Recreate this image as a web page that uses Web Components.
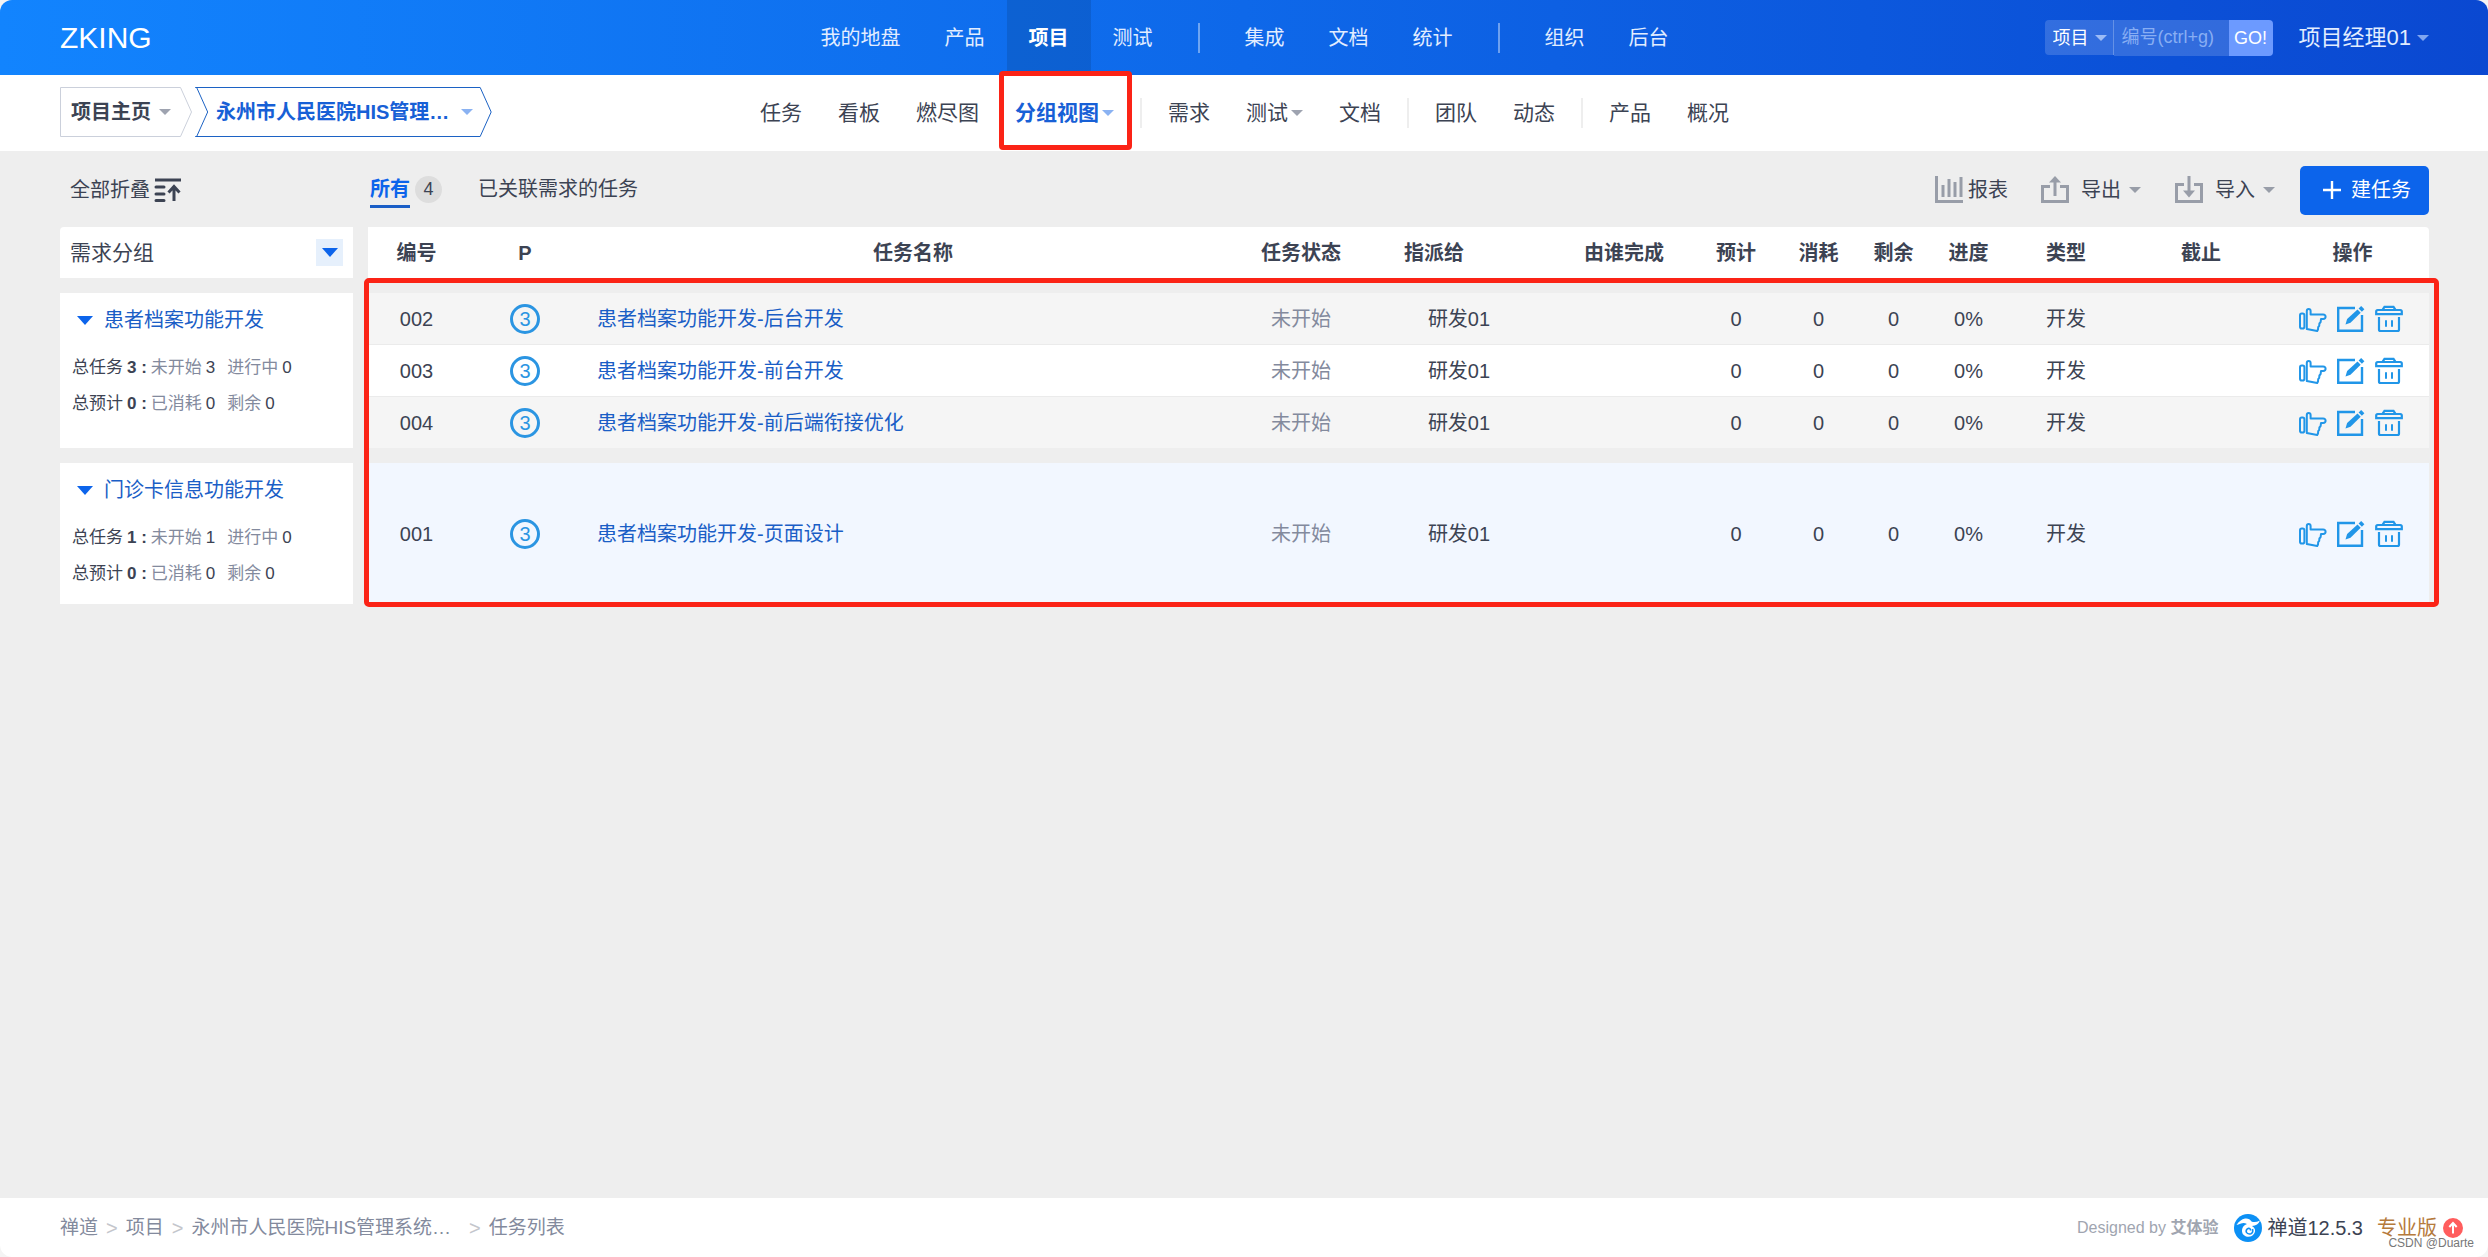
<!DOCTYPE html>
<html lang="zh-CN">
<head>
<meta charset="utf-8">
<meta name="viewport" content="width=device-width, initial-scale=1">
<title>永州市人民医院HIS管理系统::分组视图</title>
<style>
  html { background: #f4f4f4; }
  body {
    margin: 0;
    font-family: "Liberation Sans", "Noto Sans CJK SC", sans-serif;
    font-size: 20px;
    line-height: 28px;
    color: #3c4353;
    --blue: #0c64eb;
    --link: #1a5ec6;
    --muted: #838a9d;
    --mark: #fb2316;
  }
</style>
</head>
<body>
<zt-page>
  <zt-header slot="header"></zt-header>
  <zt-subheader slot="subheader"></zt-subheader>
  <zt-toolbar></zt-toolbar>
  <zt-group-table></zt-group-table>
  <zt-footer slot="footer"></zt-footer>
</zt-page>

<script>
const define = (name, html, setup) => {
  const template = document.createElement('template');
  template.innerHTML = html;
  customElements.define(name, class extends HTMLElement {
    constructor() {
      super();
      this.attachShadow({ mode: 'open' }).append(template.content.cloneNode(true));
    }
    connectedCallback() { if (setup) setup(this, this.shadowRoot); }
  });
};

const BASE = `
  :host, *, *::before, *::after { box-sizing: border-box; }
  a { color: inherit; text-decoration: none; }
  button { font: inherit; color: inherit; background: none; border: 0; padding: 0; cursor: pointer; }
`;

// Each icon: width, height, drawing.
const ICONS = {
  fold: [28, 24, '<path d="M1 2h26" stroke-width="3"/><path d="M2 9h8M2 16h8M2 22.5h8" stroke-width="3" stroke-linecap="round"/><path d="M20 23V9M14.5 14.5 20 8.5l5.5 6" stroke-width="3"/>'],
  chart: [28, 28, '<path d="M1.5 0v25.5H28" stroke-width="3"/><path d="M8 9v12M14 3v18M20 6v15M26 1v20" stroke-width="3"/>'],
  export: [28, 28, '<path d="M9 10.5H1.5v15h25v-15H19" stroke-width="3"/><path d="M14 5v15" stroke-width="3"/><path d="M8 6.5 14 0l6 6.5z" fill="currentColor" stroke="none"/>'],
  import: [28, 28, '<path d="M9 8.5H1.5v17h25v-17H19" stroke-width="3"/><path d="M14 0v16" stroke-width="3"/><path d="M8 14.5l6 7 6-7z" fill="currentColor" stroke="none"/>'],
  plus: [20, 20, '<path d="M10 1v18M1 10h18" stroke-width="2.4"/>'],
  hand: [28, 28, '<rect x="1" y="8.6" width="4.4" height="15" rx="1.8" stroke-width="2"/><path d="M7.8 24V6q0-2 1.9-2t1.9 2v3.6H24q2.6.2 2.6 2.2t-2.6 2.3h-2l-.4 3-1.2 1.4-.2 2.4-1 1.2-.2 2.4-.8 1.5z" stroke-width="2" stroke-linejoin="round"/>'],
  edit: [28, 28, '<path d="M18 3H1.2v22.800H25V10" stroke-width="2.4"/><path d="M8.5 19.500l1.600-5.500L20.500 4.500l3.200 3.200L13.500 17.700z" fill="currentColor" stroke="none"/><path d="M21.600 3.400 24.200 1l3.200 3.200-2.500 2.500z" fill="currentColor" stroke="none"/>'],
  trash: [28, 28, '<path d="M8 5.500V4.200L9.500 1.900h9L20 4.200v1.300" stroke-width="2.2"/><path d="M1.200 9.200V6.500Q1.200 5 2.700 5h22.600q1.500 0 1.500 1.500v2.700z" stroke-width="2.2"/><path d="M4 12v12.500Q4 26 5.500 26h17q1.500 0 1.500-1.500V12" stroke-width="2.2"/><path d="M11 15.200v6.600M17 15.200v6.600" stroke-width="2"/>'],
  up: [20, 20, '<circle cx="10" cy="10" r="10" fill="#ff5d5d" stroke="none"/><path d="M10 15.5V6M6.3 9 10 5l3.7 4" stroke="#fff" stroke-width="2"/>'],
  zentao: [28, 28, '<circle cx="14" cy="14" r="14" fill="#0c90f5" stroke="none"/><path d="M2.500 11Q6 5.500 11 4.500q4.500-.5 6.500 3 3.500 1.500 8.500-1Q24 11.500 18 12q4.500 3 2.500 7-3 5-8.500 3.500-4.500-2-4-6.500.5-4.500 5-6-3-1.500-6-.5T2.500 11z" fill="#fff" stroke="none"/><path d="M18.500 15q1 3.500-1.500 4.800-3.500.8-4.800-1.800-.4-3 2.300-3.800 2.400.2 1.800 2.300" stroke="#0c90f5" stroke-width="1.6"/>']
};

define('zt-icon', `<style>:host{display:inline-flex;flex:none} svg{display:block;fill:none;stroke:currentColor}</style>`,
  (el, root) => {
    const [w, h, body] = ICONS[el.getAttribute('name')];
    const box = document.createElement('template');
    box.innerHTML = `<svg width="${w}" height="${h}" viewBox="0 0 ${w} ${h}" aria-hidden="true">${body}</svg>`;
    root.append(box.content);
  });

define('zt-caret', `<style>
  :host { display: inline-block; flex: none; width: 0; height: 0;
    border: 6px solid transparent; border-top-color: currentColor; border-bottom-width: 0; }
  :host([large]) { border-width: 9px 8px 0; }
</style>`);

define('zt-page', `<style>
  :host { display: flex; flex-direction: column; min-height: 100vh; background: #eee; border-radius: 12px; overflow: hidden; }
  main { flex: 1; padding: 0 59px 24px 60px; }
</style>
<slot name="header"></slot><slot name="subheader"></slot>
<main><slot></slot></main>
<slot name="footer"></slot>`);

define('zt-header', `<style>${BASE}
  :host { display: grid; grid-template-columns: 1fr auto 1fr; align-items: center; height: 75px;
    padding: 0 59px 0 60px; background: linear-gradient(90deg, #1284fe, #0e68e9 50%, #0a48d1); color: #e2edff; }
  .brand { font-size: 30px; line-height: 36px; color: #fff; }
  nav { display: flex; align-items: center; align-self: stretch; }
  nav a { display: flex; align-items: center; height: 100%; padding: 0 22px; }
  nav a[aria-current] { background: rgba(10, 70, 150, .3); color: #fff; font-weight: 700; }
  nav i { width: 2px; height: 30px; margin: 0 23px; background: rgba(255, 255, 255, .4); }
  .tools { display: flex; align-items: center; justify-content: flex-end; }
  form { display: flex; align-items: center; height: 36px; margin: 0 26px 0 0; font-size: 18px; line-height: 24px; }
  .type { display: flex; align-items: center; position: relative; height: 35px; background: rgba(255, 255, 255, .16);
    border-right: 1px solid rgba(255, 255, 255, .25); border-radius: 4px 0 0 4px; }
  .type zt-caret { position: absolute; right: 6px; top: 15px; color: #9dbcf6; pointer-events: none; }
  select { appearance: none; font: inherit; color: #fff; background: none; border: 0; width: 68px; height: 35px; padding: 0 8px; }
  input { font: inherit; color: #fff; width: 115px; height: 36px; padding: 0 8px; border: 0; background: rgba(255, 255, 255, .16); border-radius: 0; }
  input::placeholder { color: #88aef3; opacity: 1; }
  form button { width: 44px; height: 36px; border-radius: 0 4px 4px 0; background: #6c9aff; color: #fff; }
  .user { display: flex; align-items: center; gap: 6px; font-size: 22px; }
  .user zt-caret { color: #80a6f0; }
</style>
<a class="brand" href="#">ZKING</a>
<nav aria-label="主导航">
  <a href="#">我的地盘</a><a href="#">产品</a><a href="#" aria-current="page">项目</a><a href="#">测试</a><i></i>
  <a href="#">集成</a><a href="#">文档</a><a href="#">统计</a><i></i>
  <a href="#">组织</a><a href="#">后台</a>
</nav>
<div class="tools">
  <form onsubmit="return false">
    <span class="type"><select aria-label="搜索类型"><option>项目</option></select><zt-caret></zt-caret></span>
    <input type="text" aria-label="编号" placeholder="编号(ctrl+g)">
    <button type="submit">GO!</button>
  </form>
  <button class="user" type="button">项目经理01<zt-caret></zt-caret></button>
</div>`);

define('zt-subheader', `<style>${BASE}
  :host { display: grid; grid-template-columns: 1fr auto 1fr; align-items: center; height: 76px;
    padding: 0 59px 0 60px; background: #fff; }
  .crumbs { display: flex; gap: 2px; margin-bottom: 2px; }
  .crumb { display: grid; height: 50px; font-weight: 700; }
  .crumb > * { grid-area: 1 / 1; }
  .crumb svg { width: 100%; height: 50px; fill: none; }
  .crumb button { display: flex; align-items: center; font-weight: 700; }
  .home { width: 132px; color: #3c4353; }
  .home svg { stroke: #cbd0db; }
  .home button { gap: 8px; padding-left: 11px; }
  .home zt-caret { color: #9ea3b0; }
  .project { width: 297px; color: #1760d6; }
  .project svg { stroke: #1c62c4; }
  .project button { gap: 12px; padding: 0 19px 0 22px; }
  .project span { flex: 1; text-align: left; white-space: nowrap; overflow: hidden; text-overflow: ellipsis; }
  .project zt-caret { color: #8ab2f2; }
  nav { display: flex; align-items: center; align-self: stretch; font-size: 21px; }
  nav a { position: relative; display: flex; align-items: center; height: 100%; padding: 0 18px; gap: 3px; }
  nav a zt-caret { color: #9ea3b0; }
  nav a[aria-current] { color: #1760d6; font-weight: 700; }
  nav a[aria-current] zt-caret { color: #8ab2f2; }
  nav a[aria-current]::after { content: ""; position: absolute; inset: -4px 0 1px 2px; border: 5px solid var(--mark); border-radius: 4px; }
  nav i { width: 2px; height: 30px; margin: 0 8px; background: #eee; }
</style>
<div class="crumbs">
  <div class="crumb home">
    <svg viewBox="0 0 132 50" aria-hidden="true"><path d="M.5.5H120.5L131.5 25 120.5 49.5H.5z"/></svg>
    <button type="button">项目主页<zt-caret></zt-caret></button>
  </div>
  <div class="crumb project">
    <svg viewBox="0 0 297 50" aria-hidden="true"><path d="M.5.5H285.5L296.5 25 285.5 49.5H.5M2 .5 13 25 2 49.5"/></svg>
    <button type="button"><span>永州市人民医院HIS管理…</span><zt-caret></zt-caret></button>
  </div>
</div>
<nav aria-label="项目导航">
  <a href="#">任务</a><a href="#">看板</a><a href="#">燃尽图</a><a href="#" aria-current="page">分组视图<zt-caret></zt-caret></a><i></i>
  <a href="#">需求</a><a href="#">测试<zt-caret></zt-caret></a><a href="#">文档</a><i></i>
  <a href="#">团队</a><a href="#">动态</a><i></i>
  <a href="#">产品</a><a href="#">概况</a>
</nav>`);

define('zt-toolbar', `<style>${BASE}
  :host { display: flex; align-items: center; height: 76px; padding-top: 2px; }
  .fold { display: flex; align-items: center; gap: 4px; width: 310px; padding-left: 10px; }
  .tabs { display: flex; flex: 1; gap: 36px; margin-bottom: 2px; }
  .tabs a { display: flex; align-items: center; gap: 5px; }
  .tabs a[aria-current] { color: var(--blue); font-weight: 700; }
  .tabs a[aria-current] span { height: 38px; line-height: 32px; padding-top: 3px; border-bottom: 3px solid var(--link); }
  .badge { width: 27px; height: 27px; border-radius: 50%; background: #ddd; color: #3c4353; font-size: 18px; line-height: 27px; text-align: center; font-weight: 400; }
  .actions { display: flex; align-items: center; }
  .actions button { display: flex; align-items: center; }
  .actions zt-icon, .actions zt-caret { color: #989da8; }
  .report { gap: 5px; margin-right: 33px; }
  .menu { gap: 12px; margin-right: 34px; }
  .menu zt-caret { margin-left: -4px; }
  .menu + .menu { margin-right: 25px; }
  .actions .create { gap: 9px; height: 49px; padding: 0 18px 0 22px; border-radius: 5px; background: var(--blue); color: #fff; }
  .actions .create zt-icon { color: #fff; }
</style>
<button class="fold" type="button">全部折叠<zt-icon name="fold"></zt-icon></button>
<div class="tabs">
  <a href="#" aria-current="true"><span>所有</span><b class="badge">4</b></a>
  <a href="#">已关联需求的任务</a>
</div>
<div class="actions">
  <button class="report" type="button"><zt-icon name="chart"></zt-icon>报表</button>
  <button class="menu" type="button"><zt-icon name="export"></zt-icon>导出<zt-caret></zt-caret></button>
  <button class="menu" type="button"><zt-icon name="import"></zt-icon>导入<zt-caret></zt-caret></button>
  <button class="create" type="button"><zt-icon name="plus"></zt-icon>建任务</button>
</div>`);

define('zt-group-card', `<style>${BASE}
  :host { display: block; padding: 13px 12px 0; }
  .title { display: flex; align-items: center; gap: 11px; padding-left: 5px; margin-bottom: 16px; color: var(--link); }
  .title zt-caret { color: var(--blue); }
  p { margin: 0; font-size: 17px; line-height: 36px; color: var(--muted); white-space: nowrap; display: flex; gap: 4px; }
  b, i { font-style: normal; color: #3c4353; }
  .total { color: #3c4353; }
  i { margin-right: 8px; }
</style>
<a class="title" href="#"><zt-caret large></zt-caret><slot></slot></a>
<p><span class="total">总任务</span><b id="n"></b><span>未开始</span><i id="wait"></i><span>进行中</span><i>0</i></p>
<p><span class="total">总预计</span><b>0 :</b><span>已消耗</span><i>0</i><span>剩余</span><i>0</i></p>`,
  (el, root) => {
    root.getElementById('n').textContent = el.getAttribute('count') + ' :';
    root.getElementById('wait').textContent = el.getAttribute('count');
  });

const GROUPS = [
  { name: '患者档案功能开发', tasks: [
    ['002', '患者档案功能开发-后台开发'],
    ['003', '患者档案功能开发-前台开发'],
    ['004', '患者档案功能开发-前后端衔接优化'] ] },
  { name: '门诊卡信息功能开发', tint: true, tasks: [
    ['001', '患者档案功能开发-页面设计'] ] }
];
const HEADS = ['编号', 'P', '任务名称', '任务状态', '指派给', '由谁完成', '预计', '消耗', '剩余', '进度', '类型', '截止', '操作'];
// Column widths; 0 takes the remaining space.
const WIDTHS = [293, 15, 97, 120, 0, 120, 196, 134, 90, 75, 75, 75, 120, 150, 153];

define('zt-group-table', `<style>${BASE}
  :host { display: block; position: relative; }
  table { width: 100%; table-layout: fixed; border-collapse: separate; border-spacing: 0; }
  th, td { padding: 0; text-align: center; }
  thead th { height: 51px; background: #fff; }
  thead th:first-child { border-radius: 4px 0 0 0; font-weight: 400; font-size: 21px; }
  thead th:last-child { border-radius: 0 4px 0 0; }
  thead .space { background: none; }
  thead .owner { padding-right: 50px; }
  .pick { display: flex; align-items: center; justify-content: space-between; padding: 0 10px; }
  .pick button { display: flex; align-items: center; justify-content: center; width: 27px; height: 27px; background: #e6f0fc; color: var(--blue); }
  .gap td { height: 15px; }
  .card { background: #fff; vertical-align: top; text-align: left; }
  .task td:not(.card, .space) { height: 52px; background: #f5f5f5; border-bottom: 1px solid #ebebeb; }
  .task.even td:not(.card, .space) { background: #fff; }
  .task.last td:not(.card, .space) { height: 51px; border-bottom: 0; }
  .task.tint td:not(.card, .space) { height: 141px; background: #f2f7ff; }
  .task .name { text-align: left; padding-left: 12px; color: var(--link); }
  .status { color: var(--muted); }
  .pri { display: inline-block; width: 30px; height: 30px; border: 3px solid #2b95e2; border-radius: 50%; color: #2b95e2; font-size: 20px; line-height: 24px; vertical-align: middle; }
  .ops { display: flex; justify-content: center; gap: 10px; padding-right: 3px; color: #2196e8; }
  .ops button { display: flex; }
  .mark { position: absolute; inset: 51px -10px -3px 304px; border: 5px solid var(--mark); border-radius: 5px; pointer-events: none; }
</style>
<table></table><div class="mark"></div>`,
  (el, root) => {
    const cols = WIDTHS.map(w => `<col${w ? ` style="width:${w}px"` : ''}>`).join('');
    const head = HEADS.map(h => `<th scope="col"${h === '指派给' ? ' class="owner"' : ''}>${h}</th>`).join('');
    const gap = '<tr class="gap"><td colspan="15"></td></tr>';
    const body = GROUPS.map(g => '<tbody>' + gap + g.tasks.map(([id, name], i) => {
      const last = i === g.tasks.length - 1;
      const lead = i ? '' : `<td class="card" rowspan="${g.tasks.length}"><zt-group-card count="${g.tasks.length}">${g.name}</zt-group-card></td><td class="space" rowspan="${g.tasks.length}"></td>`;
      return `<tr class="task${i % 2 ? ' even' : ''}${last ? ' last' : ''}${g.tint ? ' tint' : ''}">${lead}
        <td>${id}</td><td><span class="pri">3</span></td><td class="name"><a href="#">${name}</a></td>
        <td class="status">未开始</td><td>研发01</td><td></td><td>0</td><td>0</td><td>0</td><td>0%</td><td>开发</td><td></td>
        <td><div class="ops"><button type="button" aria-label="指派"><zt-icon name="hand"></zt-icon></button><button type="button" aria-label="编辑"><zt-icon name="edit"></zt-icon></button><button type="button" aria-label="删除"><zt-icon name="trash"></zt-icon></button></div></td></tr>`;
    }).join('') + '</tbody>').join('');
    root.querySelector('table').innerHTML = `<colgroup>${cols}</colgroup><thead><tr>
      <th scope="col"><div class="pick">需求分组<button type="button" aria-label="选择分组"><zt-caret large></zt-caret></button></div></th>
      <td class="space"></td>${head}</tr></thead>${body}`;
  });

define('zt-footer', `<style>${BASE}
  :host { position: relative; display: flex; align-items: center; justify-content: space-between; height: 59px;
    padding: 0 25px 0 60px; background: #fff; color: var(--muted); }
  nav, .info { display: flex; align-items: center; }
  nav { gap: 8px; font-size: 20px; }
  nav a, nav span { font-size: 19px; }
  nav i { font-style: normal; color: #c4c6cc; }
  nav .cut { margin-right: 10px; }
  .by { font-size: 16px; color: #a0a5b0; margin-right: 16px; }
  .ver { display: flex; align-items: center; gap: 5px; color: #3c4353; margin-right: 14px; }
  .pro { display: flex; align-items: center; gap: 6px; color: #b57a3c; }
  small { position: absolute; right: 14px; bottom: 6px; font: 12px/16px "Liberation Sans", sans-serif; color: #777; }
</style>
<nav aria-label="面包屑"><a href="#">禅道</a><i>&gt;</i><a href="#">项目</a><i>&gt;</i><a class="cut" href="#">永州市人民医院HIS管理系统…</a><i>&gt;</i><span>任务列表</span></nav>
<div class="info">
  <span class="by">Designed by <b>艾体验</b></span>
  <a class="ver" href="#"><zt-icon name="zentao"></zt-icon>禅道12.5.3</a>
  <a class="pro" href="#">专业版<zt-icon name="up"></zt-icon></a>
</div>
<small>CSDN @Duarte</small>`);
</script>
</body>
</html>
